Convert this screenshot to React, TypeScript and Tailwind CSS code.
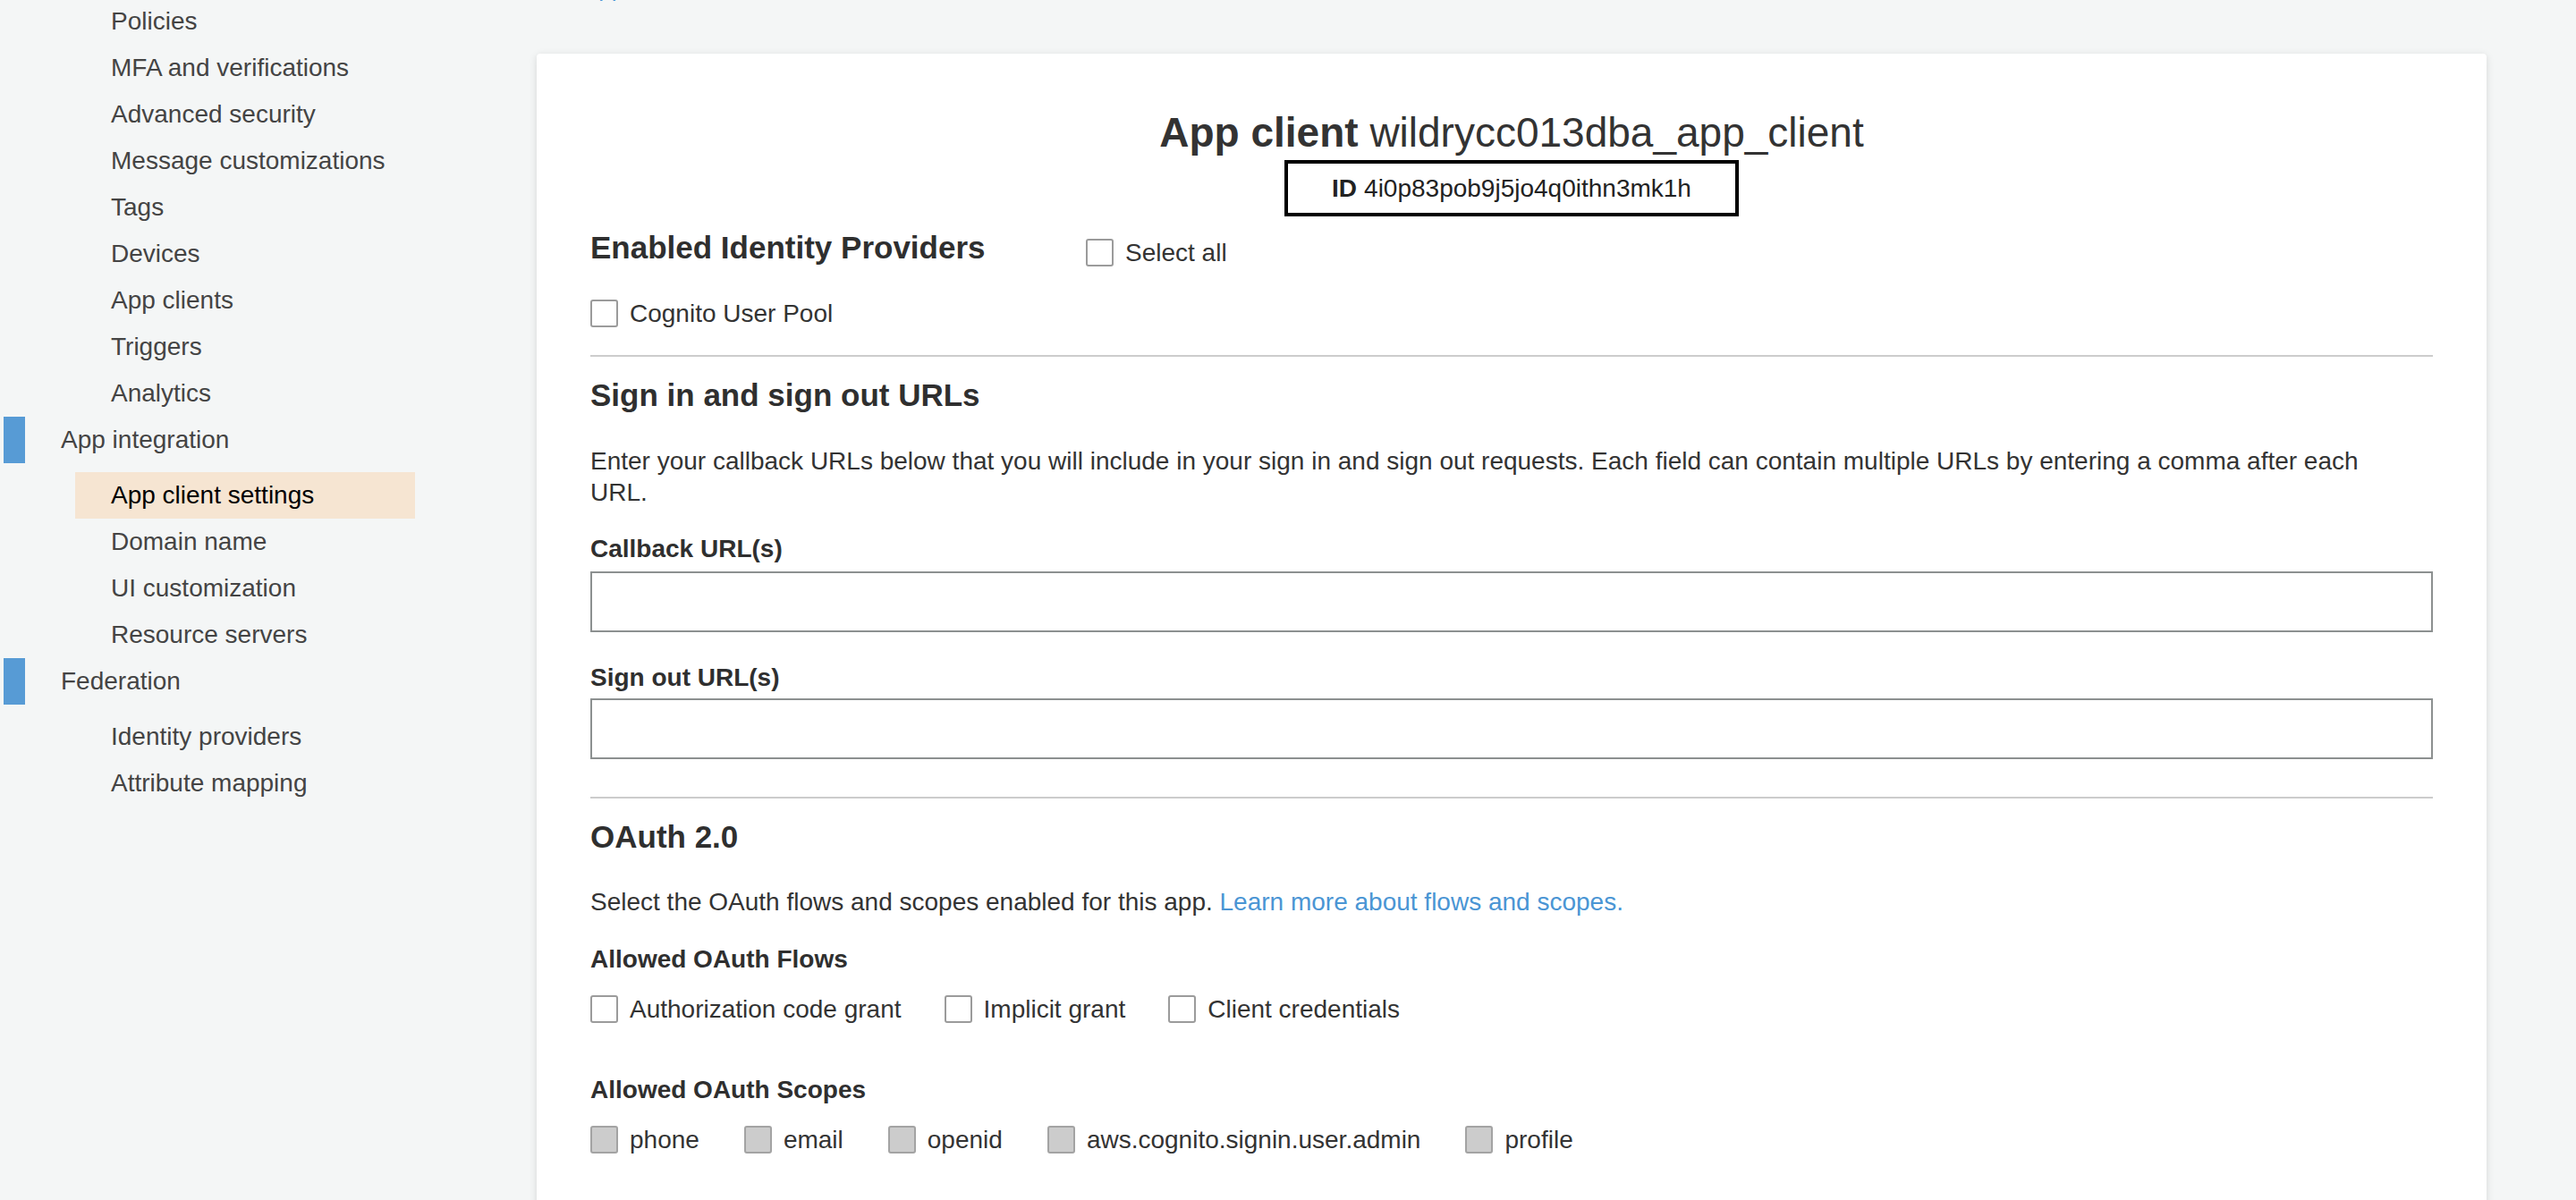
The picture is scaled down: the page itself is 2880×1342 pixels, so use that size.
import { ReactNode } from "react";

const sideTop = [
  "Policies",
  "MFA and verifications",
  "Advanced security",
  "Message customizations",
  "Tags",
  "Devices",
  "App clients",
  "Triggers",
  "Analytics",
];

function SideItem({ label }: { label: string }) {
  return <div className="h-[52px] flex items-center pl-[124px]">{label}</div>;
}

function SideSection({ label }: { label: string }) {
  return (
    <div className="h-[52px] flex items-center mb-[10px]">
      <span className="ml-[4px] w-[24px] h-full bg-[#579bd5]" />
      <span className="ml-[40px]">{label}</span>
    </div>
  );
}

function Check({ label, disabled }: { label: string; disabled?: boolean }) {
  return (
    <label className="flex items-center h-[31px] leading-[31px]">
      <input
        type="checkbox"
        disabled={disabled}
        className={
          disabled
            ? "appearance-none w-[31px] h-[31px] rounded-[3px] border-2 border-[#a3a3a3] bg-[#cccccc]"
            : "appearance-none w-[31px] h-[31px] rounded-[3px] border-2 border-[#9b9b9b] bg-white"
        }
      />
      <span className="ml-[13px]">{label}</span>
    </label>
  );
}

function Heading({ children }: { children: ReactNode }) {
  return (
    <h2 className="text-[35px] leading-[40px] font-bold text-[#2f2f2f]">
      {children}
    </h2>
  );
}

function Label({ children, className }: { children: ReactNode; className: string }) {
  return (
    <div className={`text-[28px] leading-[35px] font-bold text-[#2f2f2f] ${className}`}>
      {children}
    </div>
  );
}

export default function App() {
  return (
    <div className="h-screen overflow-hidden flex bg-[#f4f6f6] text-[#333] font-['Liberation_Sans',Arial,sans-serif]">
      <aside className="w-[600px] shrink-0 mt-[-2px] text-[28px] text-[#444]">
        {sideTop.map((s) => (
          <SideItem key={s} label={s} />
        ))}
        <SideSection label="App integration" />
        <div className="ml-[84px] w-[380px] h-[52px] pl-[40px] flex items-center bg-[#f6e5d2] text-black">
          App client settings
        </div>
        <SideItem label="Domain name" />
        <SideItem label="UI customization" />
        <SideItem label="Resource servers" />
        <SideSection label="Federation" />
        <SideItem label="Identity providers" />
        <SideItem label="Attribute mapping" />
      </aside>

      <main className="w-[2180px] shrink-0 flex flex-col">
        <a className="mt-[-30px] ml-[52px] text-[26px] leading-[35px] text-[#4a95d4]">
          App clients
        </a>
        <section className="mt-[55px] bg-white rounded-[4px] shadow-[0_2px_8px_rgba(0,0,0,0.13)] pt-[62px] px-[60px] pb-[100px] text-[28px] leading-[35px]">
          <div className="text-center text-[46px] leading-[52px] text-[#333]">
            <span className="font-bold">App client</span>{" "}
            <span className="font-light">wildrycc013dba_app_client</span>
          </div>
          <div className="mt-[5px] mx-auto w-[508px] h-[63px] border-4 border-black flex items-center justify-center text-[28px] text-[#222]">
            <span className="font-bold mr-[8px]">ID</span>4i0p83pob9j5jo4q0ithn3mk1h
          </div>

          <div className="mt-[15px] flex items-start">
            <div className="w-[554px]">
              <Heading>Enabled Identity Providers</Heading>
            </div>
            <div className="mt-[10px]">
              <Check label="Select all" />
            </div>
          </div>
          <div className="mt-[37px]">
            <Check label="Cognito User Pool" />
          </div>

          <div className="mt-[31px] h-[2px] bg-[#cccccc]" />

          <div className="mt-[23px]">
            <Heading>Sign in and sign out URLs</Heading>
          </div>
          <p className="mt-[36px] pr-[50px]">
            Enter your callback URLs below that you will include in your sign in and sign out
            requests. Each field can contain multiple URLs by entering a comma after each URL.
          </p>
          <Label className="mt-[28px]">Callback URL(s)</Label>
          <input
            type="text"
            className="mt-[8px] block w-full h-[68px] border-2 border-[#8c9090] px-3 outline-none"
          />
          <Label className="mt-[33px]">Sign out URL(s)</Label>
          <input
            type="text"
            className="mt-[6px] block w-full h-[68px] border-2 border-[#8c9090] px-3 outline-none"
          />

          <div className="mt-[42px] h-[2px] bg-[#cccccc]" />

          <div className="mt-[23px]">
            <Heading>OAuth 2.0</Heading>
          </div>
          <p className="mt-[35px]">
            Select the OAuth flows and scopes enabled for this app.{" "}
            <a className="text-[#4a95d4]">Learn more about flows and scopes.</a>
          </p>
          <Label className="mt-[29px]">Allowed OAuth Flows</Label>
          <div className="mt-[23px] flex gap-x-[48px]">
            <Check label="Authorization code grant" />
            <Check label="Implicit grant" />
            <Check label="Client credentials" />
          </div>
          <Label className="mt-[57px]">Allowed OAuth Scopes</Label>
          <div className="mt-[23px] flex gap-x-[50px]">
            <Check label="phone" disabled />
            <Check label="email" disabled />
            <Check label="openid" disabled />
            <Check label="aws.cognito.signin.user.admin" disabled />
            <Check label="profile" disabled />
          </div>
        </section>
      </main>
    </div>
  );
}
